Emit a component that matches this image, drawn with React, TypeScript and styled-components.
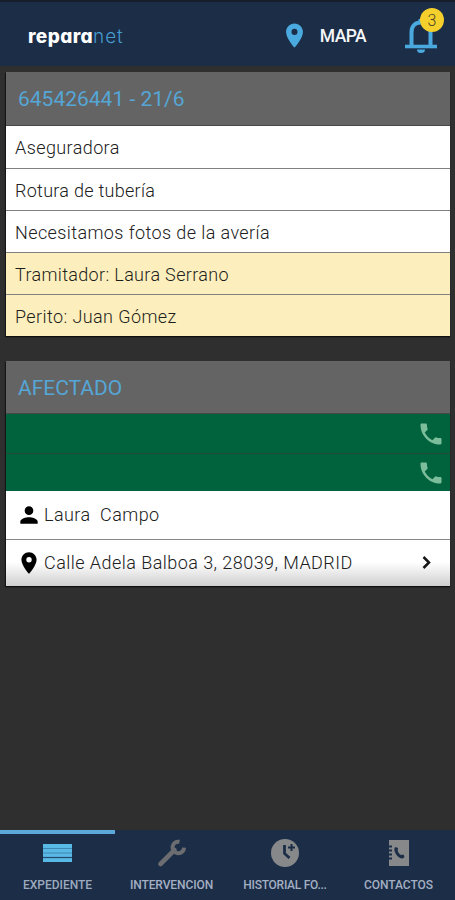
import React from "react";
import styled, { createGlobalStyle } from "styled-components";

const GlobalStyle = createGlobalStyle`
  * { box-sizing: border-box; }
  body { margin: 0; background: #2f2f2f; font-family: Roboto, "Liberation Sans", sans-serif; }
`;

const Screen = styled.div`
  display: flex;
  flex-direction: column;
  width: 455px;
  height: 900px;
  overflow: hidden;
  background: #2f2f2f;
`;

const TopBar = styled.header`
  display: flex;
  align-items: center;
  flex: none;
  height: 66px;
  padding: 3px 12px 0 28px;
  background: #1b2d47;
  border-top: 2px solid #161d2b;
`;

const Logo = styled.div`
  flex: 1;
  padding-top: 2px;
  font-family: Inter, sans-serif;
  font-feature-settings: "cv11";
  font-size: 19px;
  font-weight: 800;
  letter-spacing: 0.4px;
  line-height: 24px;
  color: #fff;
`;

const LogoTail = styled.span`
  font-weight: 300;
  letter-spacing: 0.9px;
  color: #459bcd;
`;

const MapButton = styled.div`
  display: flex;
  align-items: center;
  gap: 11px;
  margin-right: 38px;
  font-size: 17.5px;
  font-weight: 500;
  letter-spacing: -0.6px;
  line-height: 24px;
  color: #f4f6f8;
`;

const Bell = styled.div`
  position: relative;
  width: 39px;
  height: 48px;
  margin-top: -9px;
`;

const BellIcon = styled.svg`
  position: absolute;
  left: 0.5px;
  top: 8px;
`;

const Badge = styled.span`
  position: absolute;
  left: 16px;
  top: 1px;
  width: 24px;
  height: 24px;
  border-radius: 50%;
  background: #f5cf2b;
  color: #4b4426;
  font-size: 16px;
  font-weight: 300;
  line-height: 25px;
  text-align: center;
`;

const Content = styled.main`
  display: flex;
  flex-direction: column;
  flex: 1;
  gap: 25px;
  padding: 6px 5px 0 6px;
`;

const Card = styled.section`
  display: flex;
  flex-direction: column;
  box-shadow: 0 1px 1px #101010, -1px 1px 1px #181818;
`;

const CardTitle = styled.h2<{ $height: number }>`
  height: ${(p) => p.$height}px;
  margin: 0;
  padding: 0 12px;
  background: #646464;
  border-bottom: 1px solid #484848;
  color: #55a6d6;
  font-size: 21px;
  font-weight: 400;
  line-height: 54px;
`;

const Row = styled.div<{ $note?: boolean; $spacing: number }>`
  height: 42px;
  padding: 0 9px;
  background: ${(p) => (p.$note ? "#fdefbd" : "#fff")};
  color: ${(p) => (p.$note ? "#1c1e1c" : "#202020")};
  font-size: 18px;
  font-weight: 300;
  line-height: 43px;
  letter-spacing: ${(p) => p.$spacing}px;
  & + & { border-top: 1px solid #808080; }
`;

const PhoneRow = styled.div`
  display: flex;
  align-items: center;
  justify-content: flex-end;
  height: 39px;
  padding-right: 5px;
  background: #00633d;
  & + & { border-top: 1px solid #1f4b37; height: 38px; }
`;

const InfoRow = styled.div<{ $shaded?: boolean; $spacing: number }>`
  display: flex;
  align-items: center;
  height: ${(p) => (p.$shaded ? 47 : 48)}px;
  padding: 0 12px 0 10px;
  background: ${(p) => (p.$shaded ? "linear-gradient(#fff 48%, #ededed 68%, #cfcfcf)" : "#fff")};
  border-top: ${(p) => (p.$shaded ? "1px solid #888" : "none")};
  color: #202020;
  font-size: 18px;
  font-weight: 300;
  letter-spacing: ${(p) => p.$spacing}px;
`;

const InfoText = styled.span`
  flex: 1;
  margin-left: 2px;
  padding-bottom: 2px;
  white-space: pre;
`;

const NavBar = styled.nav`
  display: grid;
  grid-template-columns: 115px 113px 114px 113px;
  flex: none;
  height: 70px;
  background: #1b2d47;
`;

const NavItem = styled.div<{ $active?: boolean; $spacing: number }>`
  display: flex;
  flex-direction: column;
  align-items: center;
  border-top: 4px solid ${(p) => (p.$active ? "#5ba9db" : "transparent")};
  padding-top: 4px;
  color: ${(p) => (p.$active ? "#9daabd" : "#a3afc2")};
  font-size: 12px;
  font-weight: 500;
  line-height: 16px;
  letter-spacing: ${(p) => p.$spacing}px;
  white-space: nowrap;
`;

const NavIcon = styled.div`
  display: flex;
  align-items: center;
  justify-content: center;
  height: 30px;
  margin-bottom: 9px;
`;

const PIN = "M12 2C8.13 2 5 5.13 5 9c0 5.25 7 13 7 13s7-7.75 7-13c0-3.87-3.13-7-7-7zm0 9.5a2.5 2.5 0 0 1 0-5 2.5 2.5 0 0 1 0 5z";
const PHONE = "M6.62 10.79c1.44 2.83 3.76 5.14 6.59 6.59l2.2-2.2c.27-.27.67-.36 1.02-.24 1.12.37 2.33.57 3.57.57.55 0 1 .45 1 1V20c0 .55-.45 1-1 1C10.61 21 3 13.39 3 4c0-.55.45-1 1-1h3.5c.55 0 1 .45 1 1 0 1.25.2 2.45.57 3.57.11.35.03.74-.25 1.02l-2.2 2.2z";
const PERSON = "M12 12c2.21 0 4-1.79 4-4s-1.79-4-4-4-4 1.79-4 4 1.79 4 4 4zm0 2c-2.67 0-8 1.34-8 4v2h16v-2c0-2.66-5.33-4-8-4z";

type GlyphProps = { d: string; size: number; color: string };
const Glyph = ({ d, size, color }: GlyphProps) => (
  <svg width={size} height={size} viewBox="0 0 24 24" fill={color}>
    <path d={d} />
  </svg>
);

const PhoneEntry = () => (
  <PhoneRow>
    <Glyph d={PHONE} size={28} color="#7cbd9c" />
  </PhoneRow>
);

export default function App() {
  return (
    <Screen>
      <GlobalStyle />
      <TopBar>
        <Logo>repara<LogoTail>net</LogoTail></Logo>
        <MapButton>
          <Glyph d={PIN} size={29} color="#4aa9df" />
          MAPA
        </MapButton>
        <Bell>
          <BellIcon width="33" height="39" viewBox="0 0 33 39">
            <path d="M6.500 31V17.500C6.500 11 10 7.500 15.800 7.500S25.500 11 25.500 17.500V31" fill="none" stroke="#4aa9df" strokeWidth="4" />
            <path d="M0 31.500h32" stroke="#4aa9df" strokeWidth="3.600" />
            <path d="M13.500 6.500V4h4.500v2.500M12 34.500h8a4 3.500 0 0 1-8 0" fill="#4aa9df" />
          </BellIcon>
          <Badge>3</Badge>
        </Bell>
      </TopBar>

      <Content>
        <Card>
          <CardTitle $height={54}>645426441 - 21/6</CardTitle>
          <Row $spacing={0.4}>Aseguradora</Row>
          <Row $spacing={0.28}>Rotura de tubería</Row>
          <Row $spacing={0.4}>Necesitamos fotos de la avería</Row>
          <Row $note $spacing={0.34}>Tramitador: Laura Serrano</Row>
          <Row $note $spacing={0.4}>Perito: Juan Gómez</Row>
        </Card>
        <Card>
          <CardTitle $height={53}>AFECTADO</CardTitle>
          <PhoneEntry />
          <PhoneEntry />
          <InfoRow $spacing={0.42}>
            <Glyph d={PERSON} size={26} color="#000" />
            <InfoText>{"Laura  Campo"}</InfoText>
          </InfoRow>
          <InfoRow $shaded $spacing={0.45}>
            <Glyph d={PIN} size={26} color="#000" />
            <InfoText>Calle Adela Balboa 3, 28039, MADRID</InfoText>
            <svg width="22" height="22" viewBox="0 0 22 22" fill="none" stroke="#161616" strokeWidth="2.500">
              <path d="M7.500 5l5.500 5.500L7.500 16" />
            </svg>
          </InfoRow>
        </Card>
      </Content>

      <NavBar>
        <NavItem $active $spacing={0}>
          <NavIcon>
            <svg width="29" height="20" viewBox="0 0 29 20">
              <path d="M0 1h29v18H0z" fill="#59b9e5" />
              <path d="M0 5.500h29M0 10h29" stroke="#3f88b3" />
              <path d="M0 14.500h29" stroke="#23486a" strokeWidth="1.200" />
            </svg>
          </NavIcon>
          EXPEDIENTE
        </NavItem>
        <NavItem $spacing={-0.1}>
          <NavIcon>
            <svg width="30" height="30" viewBox="0 0 30 30">
              <path d="M3.500 26L17.500 12" stroke="#6b6d70" strokeWidth="4.600" strokeLinecap="round" />
              <path d="M22.500 3.800a5.800 5.800 0 1 0 4.600 5.800" fill="none" stroke="#6b6d70" strokeWidth="4" />
            </svg>
          </NavIcon>
          INTERVENCION
        </NavItem>
        <NavItem $spacing={-0.27}>
          <NavIcon>
            <svg width="30" height="30" viewBox="0 0 30 30">
              <circle cx="15" cy="15" r="14" fill="#87888a" />
              <path d="M14.500 7v8.500l5 4.500" fill="none" stroke="#1b2d47" strokeWidth="2.800" />
              <path d="M21.500 6v7M18 9.500h7" stroke="#1b2d47" strokeWidth="2" />
            </svg>
          </NavIcon>
          HISTORIAL FO...
        </NavItem>
        <NavItem $spacing={-0.05}>
          <NavIcon>
            <svg width="20" height="26" viewBox="0 0 20 26">
              <path d="M0 0h20v26H0z" fill="#87888a" />
              <path d="M0 6.500h3M0 10.500h3M0 14.500h3M0 18.500h3" stroke="#1b2d47" strokeWidth="1.800" />
              <path d="M6.300 7l2.700 1-.3 3c.7 1.800 1.600 3 3.300 4l2.500-.4 1 2.700-2.200 1.200C9 18 5.500 13.500 5.300 9z" fill="#1b2d47" />
            </svg>
          </NavIcon>
          CONTACTOS
        </NavItem>
      </NavBar>
    </Screen>
  );
}
